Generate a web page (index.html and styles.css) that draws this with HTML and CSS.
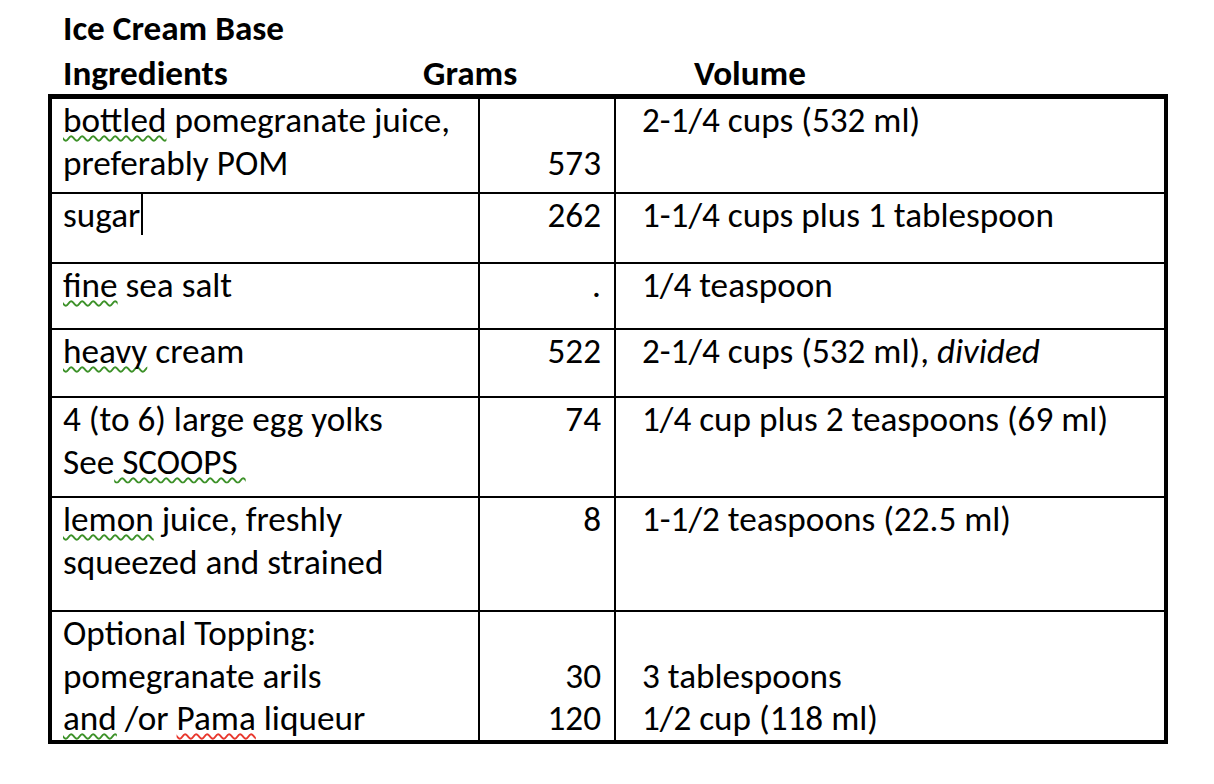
FILE: index.html
```html
<!DOCTYPE html>
<html lang="en">
<head>
<meta charset="utf-8">
<title>Ice Cream Base</title>
<link rel="stylesheet" href="styles.css">
</head>
<body>
<div class="page">
  <div class="title">Ice Cream Base</div>
  <div class="cols">
    <span>Ingredients</span>
    <span>Grams</span>
    <span>Volume</span>
  </div>
  <table class="recipe">
    <colgroup>
      <col class="c-ing">
      <col class="c-g">
      <col class="c-vol">
    </colgroup>
    <tbody>
      <tr class="r1">
        <td class="ing"><span class="sq">bottled</span> pomegranate juice,<br>preferably POM</td>
        <td class="g">&nbsp;<br>573</td>
        <td class="vol">2-1/4 cups (532 ml)</td>
      </tr>
      <tr class="r2">
        <td class="ing">sugar<span class="caret"></span></td>
        <td class="g">262</td>
        <td class="vol">1-1/4 cups plus 1 tablespoon</td>
      </tr>
      <tr class="r3">
        <td class="ing"><span class="sq">fine</span> sea salt</td>
        <td class="g">.</td>
        <td class="vol">1/4 teaspoon</td>
      </tr>
      <tr class="r4">
        <td class="ing"><span class="sq">heavy</span> cream</td>
        <td class="g">522</td>
        <td class="vol">2-1/4 cups (532 ml), <i>divided</i></td>
      </tr>
      <tr class="r5">
        <td class="ing">4 (to 6) large egg yolks<br>See<span class="sq"> SCOOPS&nbsp;</span></td>
        <td class="g">74</td>
        <td class="vol">1/4 cup plus 2 teaspoons (69 ml)</td>
      </tr>
      <tr class="r6">
        <td class="ing"><span class="sq">lemon</span> juice, freshly<br>squeezed and strained</td>
        <td class="g">8</td>
        <td class="vol">1-1/2 teaspoons (22.5 ml)</td>
      </tr>
      <tr class="r7">
        <td class="ing">Optional Topping:<br>pomegranate arils<br><span class="sq">and</span> /or <span class="sq red">Pama</span> liqueur</td>
        <td class="g">&nbsp;<br>30<br>120</td>
        <td class="vol">&nbsp;<br>3 tablespoons<br>1/2 cup (118 ml)</td>
      </tr>
    </tbody>
  </table>
</div>
</body>
</html>
```

FILE: styles.css
```css
html, body {
  margin: 0;
  padding: 0;
  background: #fff;
}

body {
  font-family: Carlito, Calibri, Lato, sans-serif;
  font-size: 35.2px;
  color: #000;
}

.page {
  padding-top: 5px;
  width: 1214px;
}

.title {
  font-weight: bold;
  line-height: 46px;
  height: 46px;
  padding-left: 63px;
}

.cols {
  font-weight: bold;
  display: grid;
  grid-template-columns: 360px 271px auto;
  padding-left: 63px;
  height: 43px;
  line-height: 44px;
}

.recipe {
  margin-left: 48px;
  width: 1120px;
  table-layout: fixed;
  border-collapse: separate;
  border-spacing: 0;
  border: 4px solid #000;
  border-top-width: 5px;
  line-height: 42.5px;
}

.c-ing { width: 428px; }
.c-g { width: 136px; }
.c-vol { width: 548px; }

.recipe td {
  vertical-align: top;
  padding: 0;
  border-bottom: 2px solid #000;
  white-space: nowrap;
}

.recipe tr:last-child td {
  border-bottom: none;
}

.recipe td.ing {
  padding-left: 11px;
  border-right: 2px solid #000;
}

.recipe td.g {
  text-align: right;
  padding-right: 13px;
  border-right: 2px solid #000;
}

.recipe td.vol {
  padding-left: 26px;
}

.r1 { height: 95px; }
.r2 { height: 70px; }
.r3 { height: 66px; }
.r4 { height: 68px; }
.r5 { height: 100px; }
.r6 { height: 114px; }
.r7 { height: 128px; }

.sq {
  text-decoration: underline wavy rgb(60, 145, 40);
  text-decoration-thickness: 1.6px;
  text-underline-offset: 3px;
  text-decoration-skip-ink: none;
}

.sq.red {
  text-decoration-color: rgb(232, 55, 45);
}

.caret {
  display: inline-block;
  width: 2px;
  height: 41px;
  background: #000;
  vertical-align: top;
  margin-left: 1px;
}
```
